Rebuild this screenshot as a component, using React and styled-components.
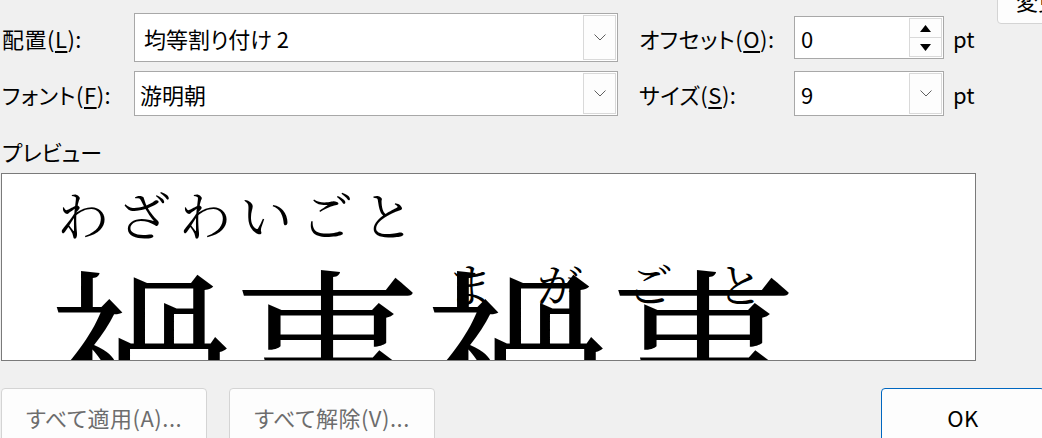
import styled, { createGlobalStyle } from "styled-components";

const Global = createGlobalStyle`
html, body {
  margin: 0;
  padding: 0;
  background: #f0f0f0;
  overflow: hidden;
}
body {
  font-family: "Noto Sans CJK JP", "Noto Sans", sans-serif;
  color: #000;
}
`

function Chevron() {
  return (
    <svg width="12" height="7" viewBox="0 0 12 7">
      <polyline points="0.5,0.5 6,6 11.5,0.5" fill="none" stroke="#606060" strokeWidth="1" />
    </svg>
  )
}

function Tri({ down }) {
  return (
    <svg width="11" height="7" viewBox="0 0 11 7">
      {down ? <polygon points="0,0 11,0 5.5,7" fill="#000" /> : <polygon points="0,7 11,7 5.5,0" fill="#000" />}
    </svg>
  )
}

export default function App() {
  return (
    <Page>
      <Global />
      <Top>
        <Form>
          <Row h={49}>
            <Label>配置(<u>L</u>):</Label>
            <Combo h={49}>
              <ComboText pad={9}>均等割り付け 2</ComboText>
              <DropBtn><Chevron /></DropBtn>
            </Combo>
            <Label2>オフセット(<u>O</u>):</Label2>
            <Field h={43}>
              <ComboText pad={6}>0</ComboText>
              <Spin>
                <SpinBtn><Tri /></SpinBtn>
                <SpinBtn><Tri down /></SpinBtn>
              </Spin>
            </Field>
            <Unit>pt</Unit>
          </Row>
          <Row h={45} gap={9}>
            <Label>フォント(<u>F</u>):</Label>
            <Combo h={45}>
              <ComboText pad={5}>游明朝</ComboText>
              <DropBtn><Chevron /></DropBtn>
            </Combo>
            <Label2>サイズ(<u>S</u>):</Label2>
            <Field h={45}>
              <ComboText pad={6}>9</ComboText>
              <DropBtn><Chevron /></DropBtn>
            </Field>
            <Unit>pt</Unit>
          </Row>
        </Form>
        <SideButton>変更(C)...</SideButton>
      </Top>

      <PreviewLabel>プレビュー</PreviewLabel>
      <Preview>
        <Group>
          <Ruby size={52} spacing={9} indent={10}>わざわいごと</Ruby>
          <Base>禍事</Base>
        </Group>
        <Group top={71}>
          <Ruby size={46} spacing={44} indent={24} overlap>まがごと</Ruby>
          <Base>禍事</Base>
        </Group>
      </Preview>

      <Footer>
        <Button disabled>すべて適用(A)...</Button>
        <Button disabled>すべて解除(V)...</Button>
        <OkButton>OK</OkButton>
      </Footer>
    </Page>
  )
}

const Page = styled.div`
width: 1042px;
height: 438px;
overflow: hidden;
padding: 13px 0 0 1px;
box-sizing: border-box;
font-size: 22px;
font-feature-settings: "palt";
`

const Top = styled.div`
display: flex;
align-items: flex-start;
`

const Form = styled.div`
width: 974px;
flex-shrink: 0;
`

const Row = styled.div`
display: flex;
align-items: center;
height: ${p => p.h}px;
margin-top: ${p => p.gap || 0}px;
`

const Label = styled.div`
width: 133px;
flex-shrink: 0;
padding-left: 1px;
box-sizing: border-box;
white-space: nowrap;
letter-spacing: 0.5px;
u { text-underline-offset: 3px; }
`

const Label2 = styled(Label)`
width: 155px;
margin-left: 21px;
padding-left: 0;
`

const Combo = styled.div`
width: 484px;
height: ${p => p.h}px;
box-sizing: border-box;
border: 1px solid #a8a8a8;
background: #fff;
display: flex;
align-items: center;
`

const Field = styled(Combo)`
width: 150px;
`

const ComboText = styled.div`
flex: 1;
padding-left: ${p => p.pad}px;
white-space: nowrap;
`

const DropBtn = styled.div`
width: 33px;
align-self: stretch;
margin: 1px 1px 1px 0;
box-sizing: border-box;
border: 1px solid #d9d9d9;
background: #fdfdfd;
display: flex;
align-items: center;
justify-content: center;
`

const Spin = styled.div`
width: 33px;
align-self: stretch;
margin: 1px 1px 1px 0;
display: flex;
flex-direction: column;
`

const SpinBtn = styled.div`
flex: 1;
box-sizing: border-box;
border: 1px solid #d9d9d9;
background: #fdfdfd;
display: flex;
align-items: center;
justify-content: center;
& + & { border-top: none; }
`

const Unit = styled.div`
margin-left: 9px;
`

const SideButton = styled.div`
margin-top: -37px;
margin-left: 22px;
flex-shrink: 0;
width: 130px;
height: 48px;
box-sizing: border-box;
border: 1px solid #d4d4d4;
border-radius: 4px;
background: #fdfdfd;
display: flex;
align-items: center;
padding-left: 18px;
white-space: nowrap;
`

const PreviewLabel = styled.div`
margin-top: 22px;
line-height: 26px;
padding-left: 1px;
`

const Preview = styled.div`
margin-top: 9px;
width: 975px;
height: 188px;
box-sizing: border-box;
border: 1px solid #7a7a7a;
background: #fff;
overflow: hidden;
display: flex;
align-items: flex-start;
padding: 12px 0 0 45px;
`

const Group = styled.div`
display: flex;
flex-direction: column;
margin-top: ${p => p.top || 0}px;
`

const Ruby = styled.div`
font-family: "Noto Serif CJK JP", "Noto Sans CJK JP", serif;
font-feature-settings: normal;
font-size: ${p => p.size}px;
line-height: ${p => p.size + 4}px;
letter-spacing: ${p => p.spacing}px;
padding-left: ${p => p.indent}px;
white-space: nowrap;
position: relative;
z-index: 1;
margin-bottom: ${p => (p.overlap ? -53 : 12)}px;
`

const Base = styled.div`
font-family: "Noto Serif CJK JP", "Noto Sans CJK JP", serif;
font-feature-settings: normal;
font-size: 187px;
line-height: 187px;
white-space: nowrap;
`

const Footer = styled.div`
display: flex;
gap: 22px;
margin-top: 27px;
`

const Button = styled.div`
flex-shrink: 0;
width: 206px;
height: 58px;
box-sizing: border-box;
border: 1px solid #d4d4d4;
border-radius: 4px;
background: #fdfdfd;
color: ${p => (p.disabled ? "#6d6d6d" : "#000")};
display: flex;
align-items: center;
justify-content: center;
white-space: nowrap;
letter-spacing: 0.5px;
`

const OkButton = styled(Button)`
margin-left: auto;
margin-right: -3px;
width: 164px;
border: 1px solid #0067c0;
`
